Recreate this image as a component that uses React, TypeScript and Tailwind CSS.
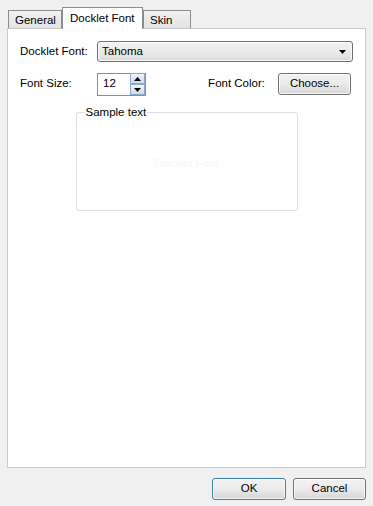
import React from "react";

const TABS = [
  { label: "General", width: "w-[54px]" },
  { label: "Docklet Font", width: "w-[81px]" },
  { label: "Skin", width: "w-[48px]" },
] as const;

function Tab({ label, width, active }: { label: string; width: string; active: boolean }) {
  if (active) {
    return (
      <div className={`relative z-10 -mb-[1px] flex h-[22px] items-center border border-b-0 border-[#898c95] bg-white pl-[7px] text-[11.5px] text-black ${width}`}>
        {label}
      </div>
    );
  }
  return (
    <div className={`flex h-[18px] items-center border border-b-0 border-[#898c95] bg-gradient-to-b from-[#f2f2f2] to-[#e3e3e3] pl-[6px] pt-[2px] text-[11.5px] text-black ${width}`}>
      {label}
    </div>
  );
}

function PushButton({
  children,
  className = "",
  primary = false,
}: {
  children: React.ReactNode;
  className?: string;
  primary?: boolean;
}) {
  return (
    <button
      type="button"
      className={`flex h-[22px] items-center justify-center rounded-[3px] border bg-gradient-to-b from-[#f2f2f2] via-[#ebebeb] to-[#d6d6d6] text-[11.5px] text-black shadow-[inset_0_0_0_1px_rgba(255,255,255,0.8)] ${primary ? "border-[#3c7fb1]" : "border-[#707070]"} ${className}`}
    >
      {children}
    </button>
  );
}

function SpinButton({ up }: { up: boolean }) {
  return (
    <div className="flex h-[11px] w-[15px] items-center justify-center border border-[#8ea8c6] bg-gradient-to-b from-[#eef5fc] to-[#c9dcef]">
      <svg width="7" height="4" viewBox="0 0 7 4">
        {up ? <path d="M0 4 L3.5 0 L7 4 Z" fill="#000" /> : <path d="M0 0 L3.5 4 L7 0 Z" fill="#000" />}
      </svg>
    </div>
  );
}

export default function App() {
  return (
    <div className="flex h-[506px] w-[373px] flex-col bg-[#f0f0f0] px-[7px] pt-[6px] font-['Liberation_Sans',Arial,sans-serif] text-[11.5px] text-black">
      <div className="flex h-[22px] items-end pl-[1px]">
        {TABS.map((t) => (
          <Tab key={t.label} label={t.label} width={t.width} active={t.label === "Docklet Font"} />
        ))}
      </div>

      <div className="flex h-[440px] flex-col border border-[#c9c9c9] bg-white px-[12px] pt-[12px]">
        <div className="flex h-[21px] items-center">
          <span className="w-[77px]">Docklet Font:</span>
          <div className="flex h-[21px] flex-1 items-center justify-between rounded-[3px] border border-[#707070] bg-gradient-to-b from-[#f2f2f2] via-[#ebebeb] to-[#dcdcdc] pl-[4px] pr-[6px] shadow-[inset_0_0_0_1px_rgba(255,255,255,0.8)]">
            <span>Tahoma</span>
            <svg width="7" height="4" viewBox="0 0 7 4">
              <path d="M0 0 L3.5 4 L7 0 Z" fill="#000" />
            </svg>
          </div>
        </div>

        <div className="mt-[11px] flex h-[22px] items-center">
          <span className="w-[77px]">Font Size:</span>
          <div className="flex h-[23px] w-[49px] items-center border border-[#8e8f8f] bg-white pl-[5px]">
            <span className="flex-1">12</span>
            <div className="flex flex-col">
              <SpinButton up />
              <SpinButton up={false} />
            </div>
          </div>
          <span className="ml-auto mr-[13px]">Font Color:</span>
          <PushButton className="mr-[2px] w-[73px]">Choose...</PushButton>
        </div>

        <fieldset className="mx-auto mt-[9px] h-[107px] w-[222px] rounded-[3px] border border-[#d5dfe5] px-[8px]">
          <legend className="px-[1px] text-[11.5px]">Sample text</legend>
          <div className="flex h-[84px] items-center justify-center text-[#f7f7f7]">Docklet Font</div>
        </fieldset>
      </div>

      <div className="flex justify-end gap-[7px] pt-[10px]">
        <PushButton primary className="w-[74px]">
          OK
        </PushButton>
        <PushButton className="w-[73px]">Cancel</PushButton>
      </div>
    </div>
  );
}
